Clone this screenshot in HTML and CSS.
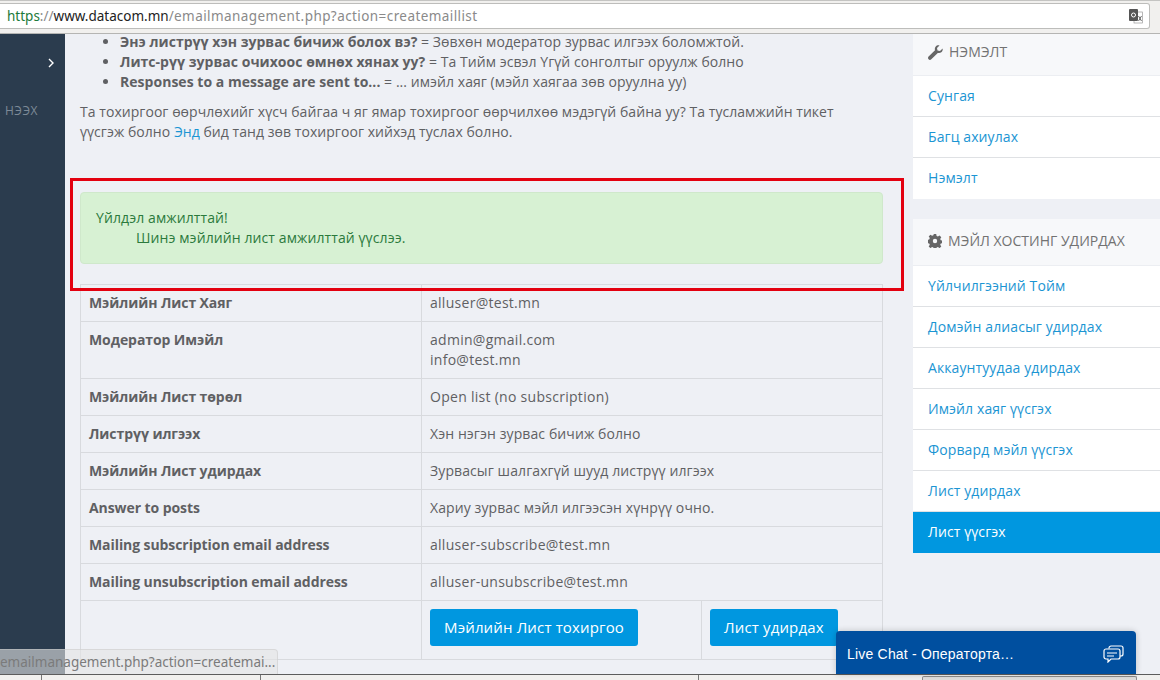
FILE: index.html
```html
<!DOCTYPE html>
<html lang="mn">
<head>
<meta charset="utf-8">
<title>Datacom</title>
<link rel="stylesheet" href="styles.css">
</head>
<body>
<div class="app">
  <header class="browser">
    <div class="urlbar">
      <div class="url"><span class="scheme">https</span><span class="faint">://</span><span class="host">www.datacom.mn</span><span class="path">/emailmanagement.php?action=createmaillist</span></div>
      <svg class="translate" width="14" height="15" viewBox="0 0 14 15"><rect x="5" y="3" width="8.600" height="11" fill="#fff" stroke="#999" stroke-width="0.7"/><rect x="0" y="0" width="9" height="12" rx="1" fill="#555"/><circle cx="4.500" cy="6" r="2" fill="none" stroke="#fff" stroke-width="1"/><path d="M9.500 7l3 5M12.500 7l-3 5" stroke="#555" stroke-width="0.9"/></svg>
    </div>
  </header>
  <div class="main">
    <nav class="rail">
      <svg class="chev" width="8" height="12" viewBox="0 0 8 12"><path d="M2 2l4 4-4 4" fill="none" stroke="#fff" stroke-width="1.400"/></svg>
      <span class="rail-label">НЭЭХ</span>
    </nav>
    <main class="content">
      <ul class="notes">
        <li><b>Энэ листрүү хэн зурвас бичиж болох вэ?</b> = Зөвхөн модератор зурвас илгээх боломжтой.</li>
        <li><b>Литс-рүү зурвас очихоос өмнөх хянах уу?</b> = Та Тийм эсвэл Үгүй сонголтыг оруулж болно</li>
        <li><b>Responses to a message are sent to...</b> = ... имэйл хаяг (мэйл хаягаа зөв оруулна уу)</li>
      </ul>
      <p class="intro">Та тохиргоог өөрчлөхийг хүсч байгаа ч яг ямар тохиргоог өөрчилхөө мэдэгүй байна уу? Та тусламжийн тикет үүсгэж болно <a href="#">Энд</a> бид танд зөв тохиргоог хийхэд туслах болно.</p>
      <div class="alert">
        <div>Үйлдэл амжилттай!</div>
        <div class="alert-msg">Шинэ мэйлийн лист амжилттай үүслээ.</div>
      </div>
      <div class="highlight"></div>
      <table class="info">
        <colgroup><col class="c1"><col class="c2"><col class="c3"></colgroup>
        <tr><th>Мэйлийн Лист Хаяг</th><td colspan="2" class="latin">alluser@test.mn</td></tr>
        <tr><th>Модератор Имэйл</th><td colspan="2" class="latin">admin@gmail.com<br>info@test.mn</td></tr>
        <tr><th>Мэйлийн Лист төрөл</th><td colspan="2" class="latin">Open list (no subscription)</td></tr>
        <tr><th>Листрүү илгээх</th><td colspan="2">Хэн нэгэн зурвас бичиж болно</td></tr>
        <tr><th>Мэйлийн Лист удирдах</th><td colspan="2">Зурвасыг шалгахгүй шууд листрүү илгээх</td></tr>
        <tr><th>Answer to posts</th><td colspan="2">Хариу зурвас мэйл илгээсэн хүнрүү очно.</td></tr>
        <tr><th>Mailing subscription email address</th><td colspan="2" class="latin">alluser-subscribe@test.mn</td></tr>
        <tr><th>Mailing unsubscription email address</th><td colspan="2" class="latin">alluser-unsubscribe@test.mn</td></tr>
        <tr class="actions"><th></th><td><a class="btn btn-wide" href="#">Мэйлийн Лист тохиргоо</a></td><td><a class="btn" href="#">Лист удирдах</a></td></tr>
      </table>
    </main>
    <aside class="side">
      <section class="panel">
        <h3 class="panel-head first">
          <svg class="ico" width="15" height="15" viewBox="0 0 15 15"><path d="M14.600 3.400c.3 1.600-.2 3-1.300 3.900-1 .8-2.300 1-3.500.6L3.300 14.300c-.8.8-2 .8-2.700 0s-.8-1.900 0-2.700L7 5.200c-.4-1.200-.2-2.500.6-3.500C8.500.5 10 0 11.500.4L9 3l.5 2.500 2.500.5z" fill="#666"/></svg>
          НЭМЭЛТ</h3>
        <a class="item" href="#">Сунгая</a>
        <a class="item" href="#">Багц ахиулах</a>
        <a class="item" href="#">Нэмэлт</a>
      </section>
      <section class="panel">
        <h3 class="panel-head">
          <svg class="ico" width="14" height="14" viewBox="0 0 14 14"><path d="M5.800 0h2.400l.4 2 1.300.6 1.700-1.100 1.700 1.700-1.100 1.700.6 1.300 2 .4v2.400l-2 .4-.6 1.300 1.100 1.700-1.700 1.700-1.700-1.100-1.300.6-.4 2H5.800l-.4-2-1.300-.6-1.700 1.100-1.700-1.700 1.100-1.700-.6-1.300-2-.4V5.800l2-.4.6-1.300-1.100-1.700 1.700-1.700 1.700 1.100 1.300-.6zM7 4.800a2.200 2.200 0 100 4.400 2.200 2.200 0 000-4.400z" fill="#666" fill-rule="evenodd"/></svg>
          МЭЙЛ ХОСТИНГ УДИРДАХ</h3>
        <a class="item" href="#">Үйлчилгээний Тойм</a>
        <a class="item" href="#">Домэйн алиасыг удирдах</a>
        <a class="item" href="#">Аккаунтуудаа удирдах</a>
        <a class="item" href="#">Имэйл хаяг үүсгэх</a>
        <a class="item" href="#">Форвард мэйл үүсгэх</a>
        <a class="item" href="#">Лист удирдах</a>
        <a class="item active" href="#">Лист үүсгэх</a>
      </section>
    </aside>
  </div>
  <footer class="taskbar">
    <span class="tick t1"></span><span class="tick t2"></span><span class="tick t3"></span><span class="slot"></span>
  </footer>
  <div class="status">emailmanagement.php?action=createmai...</div>
  <div class="chat">
    <span>Live Chat - Операторта…</span>
    <svg width="21" height="18" viewBox="0 0 21 18"><path d="M6 3.500V3a2 2 0 012-2h10a2 2 0 012 2v6a2 2 0 01-2 2h-1" fill="none" stroke="#fff" stroke-width="1.200"/><path d="M3 4h12a2 2 0 012 2v6a2 2 0 01-2 2H8l-3 3v-3H3a2 2 0 01-2-2V6a2 2 0 012-2z" fill="#004f9f" stroke="#fff" stroke-width="1.200"/><path d="M4 8h10M4 11h7" stroke="#fff" stroke-width="1.200"/></svg>
  </div>
</div>
</body>
</html>
```
FILE: styles.css
```css
* { box-sizing: border-box; }
html, body { margin: 0; height: 100%; overflow: hidden; }
body { font-family: "Open Sans", "Noto Sans", sans-serif; font-size: 14px; line-height: 20px; letter-spacing: .1px; color: #5f6063; background: #eef0f5; }
a { color: #1b95d3; text-decoration: none; }
.app { position: relative; display: flex; flex-direction: column; width: 1160px; height: 680px; overflow: hidden; }

.browser { height: 34px; flex: none; padding: 2px 10px 0 0; background: #f1f0ee; border-top: 1px solid #c4c4c2; border-bottom: 1px solid #b5b5b3; }
.urlbar { display: flex; align-items: center; justify-content: space-between; height: 26px; padding: 0 6px 0 7px; background: #fff; border: 1px solid #bdbdbb; border-left: 0; border-radius: 0 3px 3px 0; }
.url { font-family: "Noto Sans", sans-serif; font-size: 13.500px; letter-spacing: 0; color: #8a8a8a; white-space: nowrap; }
.scheme { color: #1d7a3a; }
.host { color: #222; }
.path { letter-spacing: .42px; }

.main { flex: 1; display: flex; min-height: 0; }
.rail { flex: none; width: 65px; background: #2b3c4e; display: flex; flex-direction: column; }
.chev { margin: 23px 0 0 47px; }
.rail-label { margin: 32px 0 0 5px; font-size: 12px; letter-spacing: .5px; color: #7d8a97; }

.content { position: relative; flex: none; width: 848px; padding: 0 30px 0 15px; }
.notes { margin: -2px 0 0; padding: 0 0 0 40px; height: 60px; letter-spacing: .06px; }
.notes b { font-weight: 700; letter-spacing: .03px; }
.intro { margin: 10px 0 0; padding-right: 30px; letter-spacing: .05px; }
.alert { margin: 50px 0 20px; height: 72px; padding: 15px; color: #2b7a3c; background: #d7f1d3; border: 1px solid #cfe8cb; border-radius: 4px; }
.alert-msg { padding-left: 40px; }
.highlight { position: absolute; left: 5px; top: 144px; width: 834px; height: 113px; border: 3px solid #e3000f; }

.info { width: 802px; table-layout: fixed; border-collapse: collapse; }
.c1 { width: 341px; }
.c2 { width: 280px; }
.c3 { width: 181px; }
.info th, .info td { padding: 8px; border: 1px solid #d8dade; text-align: left; vertical-align: top; font-weight: 400; }
.info th { font-weight: 700; letter-spacing: -.08px; }
.info .latin { letter-spacing: .28px; }
.actions td { height: 59px; }
.btn { display: inline-block; height: 37px; padding: 8px 14px; color: #fff; font-size: 15px; letter-spacing: .15px; line-height: 20px; background: #0097e0; border-radius: 3px; white-space: nowrap; }
.btn-wide { width: 208px; }

.side { flex: none; width: 247px; }
.panel { margin-bottom: 20px; background: #fff; }
.panel-head { display: flex; align-items: center; gap: 6px; height: 47px; margin: 0; padding: 0 15px 2px; background: #f7f8fa; border-bottom: 1px solid #eceef2; font-size: 14px; font-weight: 400; letter-spacing: 0; color: #727272; }
.panel-head.first { height: 42px; padding-bottom: 5px; }
.item { display: block; height: 41px; padding: 10px 15px; border-bottom: 1px solid #dfe1e4; }
.panel .item:last-child { border-bottom: 0; }
.item.active { color: #fff; background: #0097e0; }

.taskbar { position: relative; flex: none; height: 6px; background: #f1f0ee; border-top: 1px solid #5c5c5c; }
.tick { position: absolute; top: 0; width: 1px; height: 5px; background: #777; }
.t1 { left: 41px; } .t2 { left: 260px; } .t3 { left: 698px; }
.slot { position: absolute; left: 922px; top: 1px; width: 215px; height: 5px; background: #dedddb; border: 1px solid #8b8b8b; border-bottom: 0; border-radius: 2px 2px 0 0; }

.status { position: absolute; left: 0; top: 649px; width: 278px; height: 25px; padding: 2px 0 0 0; overflow: hidden; font-family: "Noto Sans", sans-serif; font-size: 13.500px; letter-spacing: 0; white-space: nowrap; color: #7b7b7b; background: rgba(228,228,228,.6); border: 1px solid rgba(200,200,200,.5); border-width: 1px 1px 0 0; border-radius: 0 4px 0 0; }
.chat { position: absolute; left: 836px; top: 631px; width: 300px; height: 43px; display: flex; align-items: center; justify-content: space-between; padding: 3px 12px 0 11px; font-family: "Liberation Sans", sans-serif; font-size: 14px; letter-spacing: .2px; color: #fff; background: #004f9f; border-radius: 4px 4px 0 0; box-shadow: 0 0 6px rgba(0,0,0,.2); }
```
